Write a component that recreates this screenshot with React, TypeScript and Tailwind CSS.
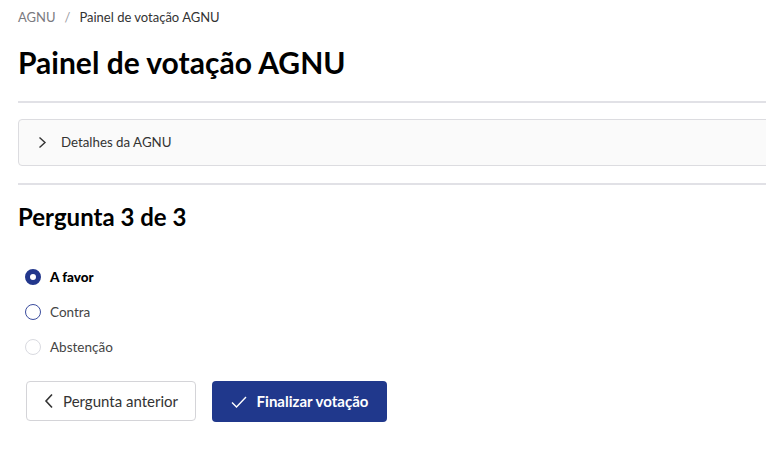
import React, { useState } from "react";

const font = { fontFamily: "Lato, 'Noto Sans', sans-serif" };

type Option = { id: string; label: string; disabled?: boolean };

const options: Option[] = [
  { id: "favor", label: "A favor" },
  { id: "contra", label: "Contra" },
  { id: "abstencao", label: "Abstenção", disabled: true },
];

const Radio: React.FC<{ checked: boolean; disabled?: boolean }> = ({ checked, disabled }) => {
  if (checked) {
    return <span className="w-4 h-4 rounded-full border-[5px] border-[#22378c] bg-white" />;
  }
  return (
    <span
      className={`w-4 h-4 rounded-full border-[1.5px] bg-white ${
        disabled ? "border-[#d9dae0]" : "border-[#3b4d9e]"
      }`}
    />
  );
};

export default function App() {
  const [selected, setSelected] = useState("favor");

  return (
    <div className="w-[766px] h-[470px] overflow-hidden bg-white text-[#222]" style={font}>
      <div className="w-[820px] pl-[18px]">
        {/* breadcrumb */}
        <div className="flex items-center h-[17px] mt-[9px] text-[13px]">
          <span className="text-[#7a7a80]">AGNU</span>
          <span className="mx-[9px] text-[#9a9aa0]">/</span>
          <span className="text-[#333]">Painel de votação AGNU</span>
        </div>

        <h1 className="mt-[18px] text-[30px] leading-[36px] font-bold text-black">
          Painel de votação AGNU
        </h1>

        <div className="mt-[21px] h-[2px] bg-[#e1e1e6]" />

        <div className="mt-[16px] h-[47px] flex items-center border border-[#dcdce0] rounded-[4px] bg-[#fafafa] pl-[19px]">
          <svg width="9" height="13" viewBox="0 0 9 13" className="mr-[14px]">
            <path d="M1.5 1.5 L7 6.5 L1.5 11.5" fill="none" stroke="#333" strokeWidth="1.4" />
          </svg>
          <span className="text-[13.3px] text-[#333]">Detalhes da AGNU</span>
        </div>

        <div className="mt-[17px] h-[2px] bg-[#e1e1e6]" />

        <h2 className="mt-[17px] text-[24px] leading-[30px] font-bold text-black">
          Pergunta 3 de 3
        </h2>

        <div className="mt-[35px] flex flex-col gap-[15px] pl-[7px]">
          {options.map((o) => (
            <button
              key={o.id}
              type="button"
              disabled={o.disabled}
              onClick={() => setSelected(o.id)}
              className="flex items-center gap-[9px] h-[20px] text-left"
            >
              <Radio checked={selected === o.id} disabled={o.disabled} />
              <span
                className={`text-[13.5px] ${
                  selected === o.id ? "font-black text-black" : "text-[#444]"
                }`}
              >
                {o.label}
              </span>
            </button>
          ))}
        </div>

        <div className="mt-[24px] flex gap-[16px] pl-[8px]">
          <button
            type="button"
            className="w-[170px] h-[40px] flex items-center justify-center gap-[9px] border border-[#d4d4d8] rounded-[4px] bg-white text-[15px] text-[#333]"
          >
            <svg width="10" height="16" viewBox="0 0 10 16">
              <path d="M8 1.5 L2 8 L8 14.5" fill="none" stroke="#333" strokeWidth="1.6" />
            </svg>
            Pergunta anterior
          </button>
          <button
            type="button"
            className="w-[175px] h-[41px] flex items-center justify-center gap-[10px] rounded-[4px] bg-[#20388c] text-[15px] font-bold text-white"
          >
            <svg width="16" height="12" viewBox="0 0 16 12">
              <path d="M1 6.5 L5.5 11 L15 1" fill="none" stroke="#fff" strokeWidth="1.4" />
            </svg>
            Finalizar votação
          </button>
        </div>
      </div>
    </div>
  );
}
